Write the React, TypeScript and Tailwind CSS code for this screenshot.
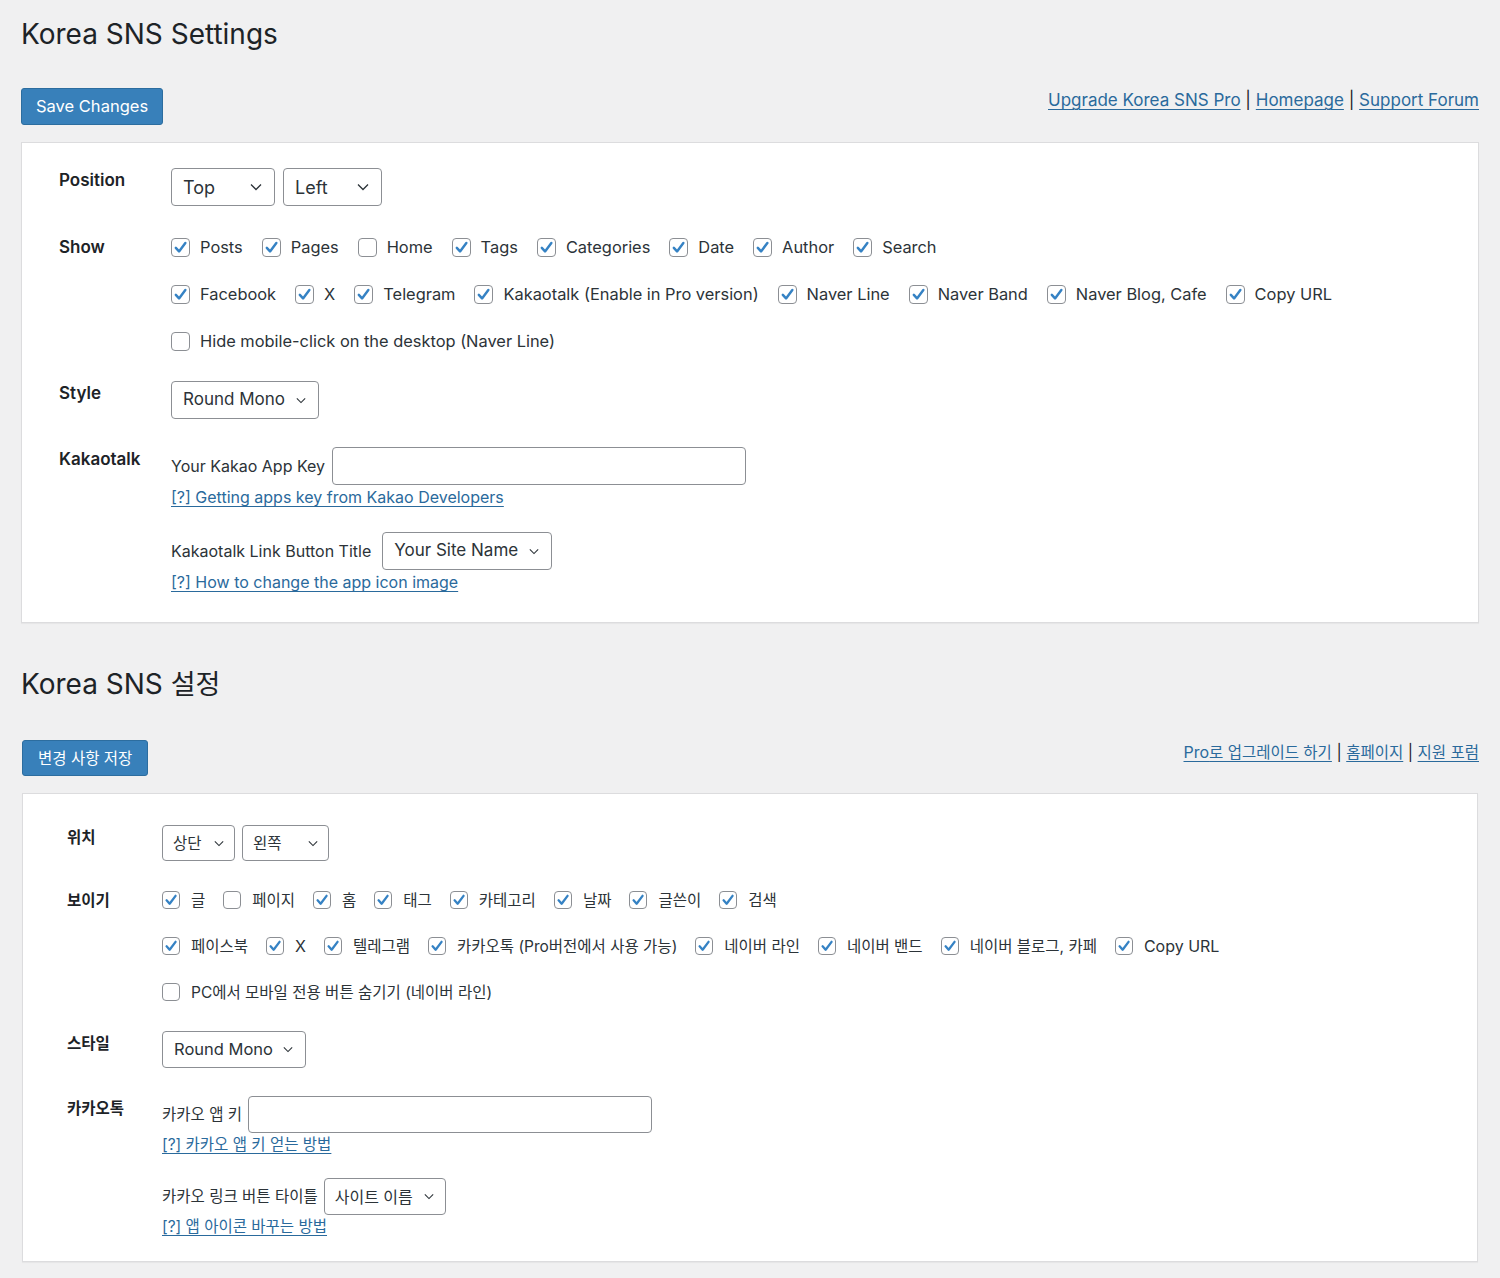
import React from "react";

type Size = "lg" | "md";

const KO = "text-[15.5px]";

const CheckIcon = () => (
  <svg viewBox="0 0 20 20" className="w-full h-full shrink-0">
    <path
      d="M4.5 10.4L8.3 14.6L15.7 4.8"
      fill="none"
      stroke="#3582c4"
      strokeWidth="2.9"
      strokeLinecap="round"
      strokeLinejoin="round"
    />
  </svg>
);

const Checkbox = ({ checked, size }: { checked: boolean; size: Size }) => (
  <span
    className={`${size === "lg" ? "w-[19px] h-[19px]" : "w-[18px] h-[18px]"} shrink-0 rounded-[4px] border border-[#8c8f94] bg-white flex`}
  >
    {checked && <CheckIcon />}
  </span>
);

const Chevron = ({ small }: { small?: boolean }) => (
  <svg
    viewBox="0 0 12 8"
    className={small ? "w-[10px] h-[7px] shrink-0" : "w-[12px] h-[8px] shrink-0"}
  >
    <path d="M1 1.5L6 6.5L11 1.5" fill="none" stroke="#2c3338" strokeWidth="1.3" />
  </svg>
);

const Select = ({
  children,
  className,
  small,
}: {
  children: React.ReactNode;
  className: string;
  small?: boolean;
}) => (
  <div
    className={`${className} flex items-center justify-between gap-[8px] rounded-[4px] border border-[#8c8f94] bg-white text-[#2c3338]`}
  >
    <span className="whitespace-nowrap">{children}</span>
    <Chevron small={small} />
  </div>
);

type Item = { label: React.ReactNode; checked: boolean };

const CheckRow = ({ items, size }: { items: Item[]; size: Size }) => (
  <div
    className={`flex items-center ${size === "lg" ? "h-[24px] gap-x-[19px] text-[16.4px]" : "h-[24px] gap-x-[18px] text-[16px]"} text-[#2c3338]`}
  >
    {items.map((it, i) => (
      <label
        key={i}
        className={`flex items-center whitespace-nowrap ${size === "lg" ? "gap-[10px]" : "gap-[11px]"}`}
      >
        <Checkbox checked={it.checked} size={size} />
        <span>{it.label}</span>
      </label>
    ))}
  </div>
);

const ko = (s: string) => <span className={KO}>{s}</span>;

const enRows: Item[][] = [
  [
    { label: "Posts", checked: true },
    { label: "Pages", checked: true },
    { label: "Home", checked: false },
    { label: "Tags", checked: true },
    { label: "Categories", checked: true },
    { label: "Date", checked: true },
    { label: "Author", checked: true },
    { label: "Search", checked: true },
  ],
  [
    { label: "Facebook", checked: true },
    { label: "X", checked: true },
    { label: "Telegram", checked: true },
    { label: "Kakaotalk (Enable in Pro version)", checked: true },
    { label: "Naver Line", checked: true },
    { label: "Naver Band", checked: true },
    { label: "Naver Blog, Cafe", checked: true },
    { label: "Copy URL", checked: true },
  ],
  [{ label: "Hide mobile-click on the desktop (Naver Line)", checked: false }],
];

const koRows: Item[][] = [
  [
    { label: ko("글"), checked: true },
    { label: ko("페이지"), checked: false },
    { label: ko("홈"), checked: true },
    { label: ko("태그"), checked: true },
    { label: ko("카테고리"), checked: true },
    { label: ko("날짜"), checked: true },
    { label: ko("글쓴이"), checked: true },
    { label: ko("검색"), checked: true },
  ],
  [
    { label: ko("페이스북"), checked: true },
    { label: "X", checked: true },
    { label: ko("텔레그램"), checked: true },
    { label: ko("카카오톡 (Pro버전에서 사용 가능)"), checked: true },
    { label: ko("네이버 라인"), checked: true },
    { label: ko("네이버 밴드"), checked: true },
    { label: ko("네이버 블로그, 카페"), checked: true },
    { label: "Copy URL", checked: true },
  ],
  [{ label: ko("PC에서 모바일 전용 버튼 숨기기 (네이버 라인)"), checked: false }],
];

const linkCls = "text-[#2a6a9c] underline underline-offset-[3px] decoration-1";

const EnglishSection = () => (
  <section>
    <h1 className="text-[28px] leading-[38px] font-normal">Korea SNS Settings</h1>
    <div className="mt-[35px] flex items-start justify-between">
      <button className="h-[37px] px-[14px] rounded-[3px] bg-[#3880ba] border border-[#2c6d9f] text-white text-[16.5px]">
        Save Changes
      </button>
      <div className="text-[17px] leading-[24px] text-[#1d2327]">
        <a className={linkCls}>Upgrade Korea SNS Pro</a> | <a className={linkCls}>Homepage</a> |{" "}
        <a className={linkCls}>Support Forum</a>
      </div>
    </div>
    <div className="mt-[17px] bg-white border border-[#dcdcde] shadow-[0_1px_1px_rgba(0,0,0,0.04)] pl-[37px] pt-[25px] pb-[28px]">
      <div className="flex">
        <div className="w-[112px] text-[17px] leading-[24px] font-semibold">Position</div>
        <div className="flex gap-[8px] text-[18px]">
          <Select className="w-[104px] h-[38px] pl-[11px] pr-[12px]">Top</Select>
          <Select className="w-[99px] h-[38px] pl-[11px] pr-[12px]">Left</Select>
        </div>
      </div>
      <div className="flex mt-[29px]">
        <div className="w-[112px] text-[17px] leading-[24px] font-semibold">Show</div>
        <div className="flex flex-col gap-[23px]">
          {enRows.map((r, i) => (
            <CheckRow key={i} items={r} size="lg" />
          ))}
        </div>
      </div>
      <div className="flex mt-[28px]">
        <div className="w-[112px] text-[17px] leading-[24px] font-semibold">Style</div>
        <Select small className="w-[148px] h-[38px] pl-[11px] pr-[12px] text-[17px]">
          Round Mono
        </Select>
      </div>
      <div className="flex mt-[28px]">
        <div className="w-[112px] text-[17px] leading-[24px] font-semibold">Kakaotalk</div>
        <div className="text-[16px] text-[#2c3338]">
          <div className="flex items-center gap-[7px]">
            <span>Your Kakao App Key</span>
            <div className="w-[414px] h-[38px] rounded-[4px] border border-[#8c8f94] bg-white" />
          </div>
          <div className="leading-[24px]">
            <a className={linkCls}>[?] Getting apps key from Kakao Developers</a>
          </div>
          <div className="flex items-center gap-[11px] mt-[23px]">
            <span>Kakaotalk Link Button Title</span>
            <Select small className="w-[170px] h-[38px] pl-[11px] pr-[12px] text-[17px]">
              Your Site Name
            </Select>
          </div>
          <div className="leading-[24px]">
            <a className={linkCls}>[?] How to change the app icon image</a>
          </div>
        </div>
      </div>
    </div>
  </section>
);

const KoreanSection = () => (
  <section className="mt-[42px]">
    <h1 className="text-[28px] leading-[38px] font-normal">
      Korea SNS <span className="text-[27px]">설정</span>
    </h1>
    <div className="mt-[36px] flex items-start justify-between">
      <button className="ml-[1px] h-[36px] px-[15px] rounded-[3px] bg-[#3880ba] border border-[#2c6d9f] text-white">
        <span className={KO}>변경 사항 저장</span>
      </button>
      <div className="text-[16px] leading-[24px] text-[#1d2327]">
        <a className={linkCls}>
          Pro<span className={KO}>로 업그레이드 하기</span>
        </a>{" "}
        | <a className={`${linkCls} ${KO}`}>홈페이지</a> | <a className={`${linkCls} ${KO}`}>지원 포럼</a>
      </div>
    </div>
    <div className="mt-[17px] mx-[1px] bg-white border border-[#dcdcde] shadow-[0_1px_1px_rgba(0,0,0,0.04)] pl-[44px] pt-[31px] pb-[23px]">
      <div className="flex">
        <div className="w-[95px] leading-[24px] font-semibold">
          <span className={KO}>위치</span>
        </div>
        <div className="flex gap-[7px]">
          <Select small className="w-[73px] h-[36px] pl-[10px] pr-[10px]">
            <span className={KO}>상단</span>
          </Select>
          <Select small className="w-[87px] h-[36px] pl-[10px] pr-[10px]">
            <span className={KO}>왼쪽</span>
          </Select>
        </div>
      </div>
      <div className="flex mt-[27px]">
        <div className="w-[95px] leading-[24px] font-semibold">
          <span className={KO}>보이기</span>
        </div>
        <div className="flex flex-col gap-[22px]">
          {koRows.map((r, i) => (
            <CheckRow key={i} items={r} size="md" />
          ))}
        </div>
      </div>
      <div className="flex mt-[27px]">
        <div className="w-[95px] leading-[24px] font-semibold">
          <span className={KO}>스타일</span>
        </div>
        <Select small className="w-[144px] h-[37px] pl-[11px] pr-[12px] text-[16.5px]">
          Round Mono
        </Select>
      </div>
      <div className="flex mt-[28px]">
        <div className="w-[95px] leading-[24px] font-semibold">
          <span className={KO}>카카오톡</span>
        </div>
        <div className="text-[#2c3338]">
          <div className="flex items-center gap-[6px]">
            <span className={KO}>카카오 앱 키</span>
            <div className="w-[404px] h-[37px] rounded-[4px] border border-[#8c8f94] bg-white" />
          </div>
          <div className="leading-[23px]">
            <a className={`${linkCls} ${KO}`}>[?] 카카오 앱 키 얻는 방법</a>
          </div>
          <div className="flex items-center gap-[6px] mt-[22px]">
            <span className={KO}>카카오 링크 버튼 타이틀</span>
            <Select small className="w-[122px] h-[37px] pl-[10px] pr-[11px]">
              <span className="text-[16px]">사이트 이름</span>
            </Select>
          </div>
          <div className="leading-[23px]">
            <a className={`${linkCls} ${KO}`}>[?] 앱 아이콘 바꾸는 방법</a>
          </div>
        </div>
      </div>
    </div>
  </section>
);

export default function App() {
  return (
    <div className="min-h-screen bg-[#f0f0f1] text-[#1d2327] font-['Inter','Noto_Sans_CJK_KR',sans-serif] px-[21px] pt-[15px] pb-[16px]">
      <EnglishSection />
      <KoreanSection />
    </div>
  );
}
